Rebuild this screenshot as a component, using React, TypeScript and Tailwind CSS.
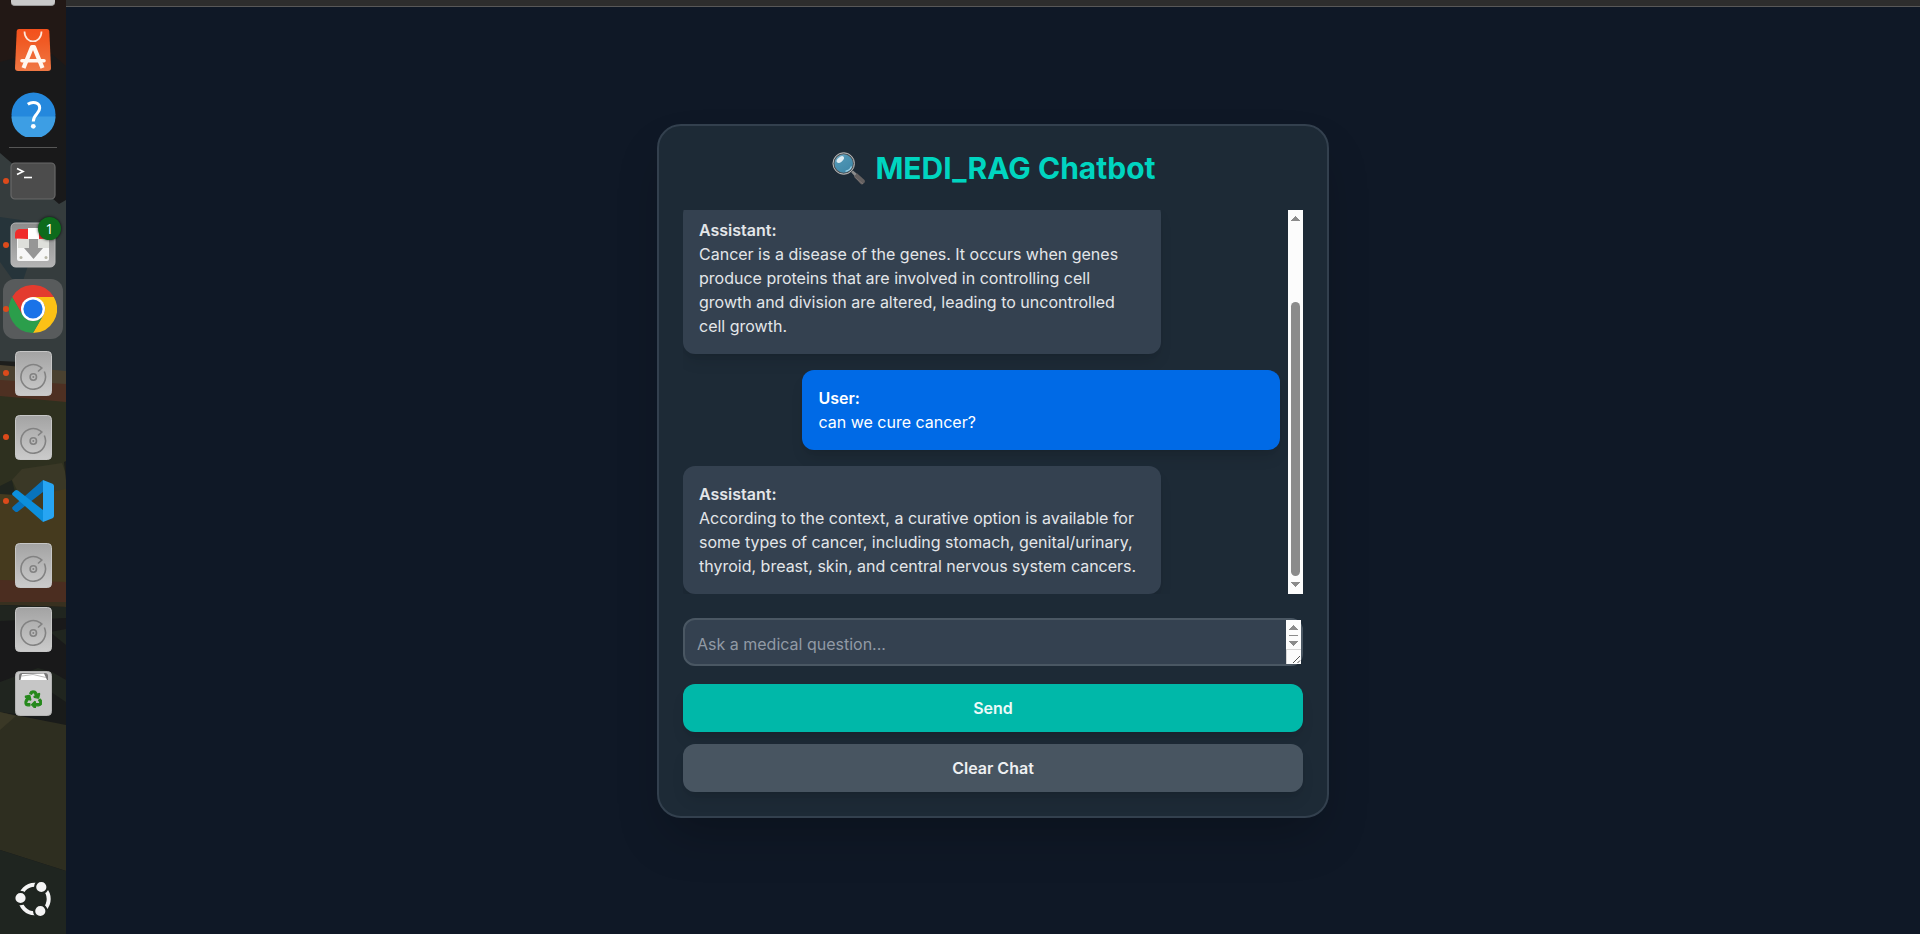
import React from "react";
import { FaRecycle } from "react-icons/fa";

type IconProps = { className?: string };

const Wallpaper = () => (
  <svg className="absolute inset-0" width="66" height="934" viewBox="0 0 66 934">
    <rect width="66" height="934" fill="#19191a" />
    <path d="M0 0H66V66L52 54H30L0 62Z" fill="#221815" />
    <path d="M0 153L59 204L66 200V371H0Z" fill="#353c3d" />
    <path d="M0 217L42 223L20 290L0 262Z" fill="#26343a" />
    <path d="M0 361L66 364V372L0 366Z" fill="#1d1e1c" />
    <path d="M34 361H66V372L30 368Z" fill="#353c3d" />
    <path d="M0 365L66 371V386H0Z" fill="#4a4130" />
    <path d="M0 380L66 384V404H0Z" fill="#4e3022" />
    <path d="M0 396L66 402V500H0Z" fill="#2e301f" />
    <path d="M0 486L12 480L16 496L0 495Z" fill="#20251e" />
    <path d="M12 480L22 469L62 463L66 474V500H22Z" fill="#3a3826" />
    <path d="M64 462L66 461V480Z" fill="#1d1e1c" />
    <path d="M0 494L30 496L66 489V584H0Z" fill="#453a1e" />
    <path d="M0 580L66 582V603H0Z" fill="#4b2d20" />
    <path d="M0 602H66V607L0 605Z" fill="#38301f" />
    <path d="M0 605L66 607V618L0 621Z" fill="#20251f" />
    <path d="M50 632L66 629V645Z" fill="#20251f" />
    <path d="M0 682L38 668L52 672L66 680V705L22 715L0 712Z" fill="#20251f" />
    <path d="M22 715L48 690L66 702V726Z" fill="#191b1a" />
    <path d="M0 712L66 725V871L0 850Z" fill="#2e2e20" />
    <path d="M0 712L16 716L0 730Z" fill="#3a3826" />
    <path d="M0 850L66 871V934H0Z" fill="#1f2520" />
  </svg>
);

const SoftwareIcon = ({ className }: IconProps) => (
  <svg className={className} width="36" height="42" viewBox="0 0 36 42">
    <defs>
      <linearGradient id="bag" x2="0" y2="1">
        <stop stopColor="#f4501c" />
        <stop offset=".3" stopColor="#f05a24" />
        <stop offset="1" stopColor="#f07844" />
      </linearGradient>
    </defs>
    <path d="M4 0H32Q34 0 34.300 2L36 39Q36 42 33 42H3Q0 42 0 39L1.700 2Q2 0 4 0Z" fill="url(#bag)" />
    <path d="M9.500 2.500C9.500 15.500 26.500 15.500 26.500 2.500" fill="none" stroke="#fde7dc" strokeWidth="1.700" />
    <path d="M8.500 39L17 18H19L27.500 39" fill="none" stroke="#fff7f0" strokeWidth="4.200" strokeLinejoin="round" />
    <path d="M7 31.800H29" stroke="#fff7f0" strokeWidth="3.600" strokeLinecap="round" />
  </svg>
);

const HelpIcon = ({ className }: IconProps) => (
  <svg className={className} width="45" height="45" viewBox="0 0 45 45">
    <circle cx="22.500" cy="22.500" r="22" fill="#2488dd" />
    <path d="M.5 24.500H44.500A22 22 0 0 1 .5 24.500Z" fill="#3d9ee4" />
    <path d="M16.800 12.200C21.500 9 28.700 10.200 28.700 16C28.700 22 22.300 22.300 22.300 29.500" fill="none" stroke="#fff" strokeWidth="3" />
    <circle cx="22.300" cy="34.300" r="2.400" fill="#fff" />
  </svg>
);

const TerminalIcon = ({ className }: IconProps) => (
  <svg className={className} width="46" height="38" viewBox="0 0 46 38">
    <rect x="1" y="1" width="44" height="36" rx="4" fill="#4c4c4c" stroke="#686868" strokeWidth="1.200" />
    <path d="M7 6.500L13 9.500L7 12.500" fill="none" stroke="#fff" strokeWidth="1.700" />
    <path d="M14 15.500H22" stroke="#fff" strokeWidth="1.600" />
  </svg>
);

const InstallerIcon = ({ className }: IconProps) => (
  <svg className={className} width="46" height="46" viewBox="0 0 46 46">
    <defs>
      <linearGradient id="inst" x2="0" y2="1">
        <stop stopColor="#8c8c8c" />
        <stop offset="1" stopColor="#b4b4b4" />
      </linearGradient>
    </defs>
    <rect x="1" y="1" width="44" height="44" rx="4.500" fill="url(#inst)" stroke="#b8b8b8" />
    <rect x="7" y="15" width="32" height="24" rx="2" fill="#f7f7f7" />
    <path d="M8 17H19V26H8ZM28 17H39V26H28Z" fill="#dedfdb" />
    <path d="M9 7H18V17L5 16.500V12Q5 8 9 7Z" fill="#f02b2b" />
    <path d="M18 6H29V17H18Z" fill="#fff" />
    <path d="M29 7H37Q41 8 41 12V16.500L29 17Z" fill="#f02b2b" />
    <path d="M19 17H28V26H33L23.500 37L14 26H19Z" fill="#969696" />
    <circle cx="11" cy="35.500" r="1.500" fill="#b9b8a8" />
    <circle cx="36" cy="35.500" r="1.500" fill="#b9b8a8" />
  </svg>
);

const ChromeIcon = ({ className }: IconProps) => (
  <svg className={className} width="48" height="48" viewBox="0 0 48 48">
    <path d="M3.200 12A24 24 0 0 1 44.800 12H24L13.600 30Z" fill="#e33b2e" />
    <path d="M44.800 12A24 24 0 0 1 24 48L34.400 30A12 12 0 0 0 34.400 18L24 12Z" fill="#fbc116" />
    <path d="M24 48A24 24 0 0 1 3.200 12L13.600 30A12 12 0 0 0 34.400 30Z" fill="#2b9e4b" />
    <circle cx="24" cy="24" r="12" fill="#fff" />
    <circle cx="24" cy="24" r="9.600" fill="#1a73e8" />
  </svg>
);

const DriveIcon = ({ className }: IconProps) => (
  <svg className={className} width="37" height="45" viewBox="0 0 37 45">
    <defs>
      <linearGradient id="drive" x2="0" y2="1">
        <stop stopColor="#a3a3a3" />
        <stop offset="1" stopColor="#cbcbcb" />
      </linearGradient>
    </defs>
    <rect x=".5" y=".5" width="36" height="44" rx="4" fill="url(#drive)" stroke="#c6c6c6" />
    <path d="M29.300 20.500A12.300 12.300 0 1 1 25 15.600L26.800 17L23 20.500" fill="none" stroke="#828282" strokeWidth="1.600" />
    <circle cx="18.300" cy="26" r="3.200" fill="none" stroke="#828282" strokeWidth="1.600" />
    <circle cx="18.300" cy="26" r="1" fill="#828282" />
  </svg>
);

const CodeIcon = ({ className }: IconProps) => (
  <svg className={className} width="42" height="42" viewBox="0 0 42 42">
    <path d="M31 0V12L6 31.500Q4.500 32.500 3 31.500L.6 29.300Q-.5 28 .8 26.700Z" fill="#0873bd" />
    <path d="M31 42V30L6 10.500Q4.500 9.500 3 10.500L.6 12.700Q-.5 14 .8 15.300Z" fill="#0c8fdc" />
    <path d="M31 0L40.500 3.800Q42 4.500 42 6V36Q42 37.500 40.500 38.200L31 42Z" fill="#27a5f3" />
  </svg>
);

const TrashIcon = ({ className }: IconProps) => (
  <svg className={className} width="37" height="45" viewBox="0 0 37 45">
    <rect x=".5" y=".5" width="36" height="44" rx="4" fill="#c6c6c6" stroke="#b3b3b3" />
    <path d="M4 9V5Q4 2 7 2H30Q33 2 33 5V9Z" fill="#777" />
    <path d="M5.500 9L7 3L29 2.500L32 9Z" fill="#fff" />
    <path d="M7 5L18 3.500L31 6.500" fill="none" stroke="#aaa" strokeWidth=".8" />
    <FaRecycle x="9.500" y="19.500" size={17.5} color="#26891c" style={{ strokeWidth: 34 }} />
  </svg>
);

const UbuntuIcon = ({ className }: IconProps) => (
  <svg className={className} width="36" height="36" viewBox="0 0 36 36">
    <circle cx="19.500" cy="18" r="14.200" fill="none" stroke="#f4f4f4" strokeWidth="4" />
    <g fill="#f4f4f4" stroke="#1f2520" strokeWidth="2.200">
      <circle cx="5.500" cy="17" r="6.200" />
      <circle cx="26.300" cy="6" r="6.200" />
      <circle cx="25.300" cy="30" r="6.200" />
    </g>
  </svg>
);

const MagnifierIcon = ({ className }: IconProps) => (
  <svg className={className} width="34" height="34" viewBox="0 0 34 34">
    <defs>
      <linearGradient id="lens" x2=".7" y2="1">
        <stop stopColor="#8fbdd3" />
        <stop offset=".4" stopColor="#4d94b3" />
        <stop offset="1" stopColor="#3f87a8" />
      </linearGradient>
    </defs>
    <path d="M19 20L21 18.500L25 22L23 24.500Z" fill="#8d8d8d" />
    <path d="M22 24.500L25 21.300L32.500 28Q33.500 29 32.500 30.500L31 32Q29.800 33 28.500 31.800Z" fill="#646060" />
    <path d="M22.500 25L31 32" stroke="#857d7d" strokeWidth=".7" />
    <circle cx="11.700" cy="11.500" r="10.200" fill="url(#lens)" stroke="#4c5054" strokeWidth="1.900" />
    <circle cx="11.700" cy="11.500" r="10.700" fill="none" stroke="#b9bcbd" strokeWidth="1" />
    <ellipse cx="8.300" cy="7.600" rx="4.300" ry="2.400" fill="#dcebf2" transform="rotate(-40 8.300 7.600)" />
    <path d="M13.500 19.300Q18 18.500 19.500 14.500" fill="none" stroke="#9fd3e8" strokeWidth="1.200" />
  </svg>
);

const Slot = ({ children, running, active }: { children: React.ReactNode; running?: boolean; active?: boolean }) => (
  <div className="relative flex h-16 w-full shrink-0 items-center justify-center">
    {active && <div className="absolute top-0.5 left-[3px] size-[60px] rounded-xl bg-[#585b5c]" />}
    <div className="relative">{children}</div>
    {running && <div className="absolute top-[29px] left-[3px] size-[5.500px] rounded-full bg-[#dc4a1b]" />}
  </div>
);

const Dock = () => (
  <aside className="relative flex h-full w-[66px] shrink-0 flex-col overflow-hidden">
    <Wallpaper />
    <div className="relative flex h-[18px] shrink-0 justify-center">
      <div className="h-1.5 w-11 rounded-b border-b border-[#999] bg-[#c9c9c9]" />
    </div>
    <Slot><SoftwareIcon /></Slot>
    <Slot><HelpIcon /></Slot>
    <div className="relative flex h-[3px] shrink-0 items-center justify-center">
      <div className="h-px w-12 bg-[#565656]" />
    </div>
    <Slot running><TerminalIcon /></Slot>
    <Slot running>
      <InstallerIcon />
      <span className="absolute -top-[5px] left-7 flex size-[23px] items-center justify-center rounded-full bg-[#0d6b1c] font-['Noto_Sans',sans-serif] text-sm text-white shadow-[0_0_3px_rgba(0,0,0,0.8)]">1</span>
    </Slot>
    <Slot running active><ChromeIcon /></Slot>
    <Slot running><DriveIcon /></Slot>
    <Slot running><DriveIcon /></Slot>
    <Slot running><CodeIcon /></Slot>
    <Slot><DriveIcon /></Slot>
    <Slot><DriveIcon /></Slot>
    <Slot><TrashIcon /></Slot>
    <div className="relative mt-auto flex h-[53px] shrink-0 items-start justify-center pr-px">
      <UbuntuIcon />
    </div>
  </aside>
);

const Arrow = ({ down }: { down?: boolean }) => (
  <svg width="9" height="5" viewBox="0 0 9 5" shapeRendering="crispEdges">
    <path d={down ? "M0 0H9L4.500 5Z" : "M0 5H9L4.500 0Z"} fill="#8b8b8b" />
  </svg>
);

const Message = ({ role, children }: { role: "User" | "Assistant"; children: React.ReactNode }) => (
  <div
    className={
      role === "User"
        ? "w-4/5 shrink-0 self-end rounded-xl bg-[#006ae6] p-4 text-white shadow-lg"
        : "w-4/5 shrink-0 rounded-xl bg-[#344150] p-4 text-[#e3e6e9] shadow-lg"
    }
  >
    <strong className="block font-semibold">{role}:</strong>
    <p>{children}</p>
  </div>
);

export default function App() {
  return (
    <div className="flex h-[934px] w-full overflow-hidden bg-[#0f1826] font-[Inter,sans-serif] text-base leading-6">
      <Dock />
      <div className="flex min-w-0 flex-1 flex-col">
        <div className="h-[7px] shrink-0 border-b border-[#585858] bg-[#2d2d2d]" />
        <main className="flex flex-1 justify-center pt-[117px]">
          <section className="h-[694px] w-2xl rounded-3xl border-2 border-[#33404e] bg-[#1d2a36] p-6 shadow-2xl">
            <h1 className="mb-6 flex h-9 items-center justify-center pl-0.5 text-3xl font-bold text-[#00d5c0]">
              <MagnifierIcon className="mt-0.5 mr-[9px]" />
              <span>MEDI_RAG Chatbot</span>
            </h1>
            <div className="mb-6 flex h-96 overflow-hidden">
              <div className="flex min-w-0 flex-1 flex-col justify-end gap-4 pr-2">
                <Message role="Assistant">
                  Cancer is a disease of the genes. It occurs when genes produce proteins that are involved in controlling cell growth and division are altered, leading to uncontrolled cell growth.
                </Message>
                <Message role="User">can we cure cancer?</Message>
                <Message role="Assistant">
                  According to the context, a curative option is available for some types of cancer, including stomach, genital/urinary, thyroid, breast, skin, and central nervous system cancers.
                </Message>
              </div>
              <div className="flex w-[15px] flex-col items-center bg-[#fcfcfc] pt-1.5 pb-[7px]">
                <Arrow />
                <div className="mt-[81px] h-[240px] w-[9px] flex-1 rounded-full bg-[#8b8b8b]" />
                <div className="mt-1.5 flex"><Arrow down /></div>
              </div>
            </div>
            <div className="mb-[18px] flex h-12 rounded-xl border-2 border-[#4a5763] bg-[#344150]">
              <div className="flex-1 px-3 pt-3 text-[#919aa5]">Ask a medical question...</div>
              <div className="flex w-[15px] flex-col bg-[#fcfcfc]">
                <div className="flex h-[29px] flex-col items-center pt-[5px]">
                  <Arrow />
                  <div className="my-[5px] h-px w-[9px] shrink-0 bg-[#8b8b8b]" />
                  <Arrow down />
                </div>
                <div className="h-[15px] border-t border-l border-[#d5d5d5]">
                  <svg width="14" height="14" viewBox="0 0 14 14">
                    <path d="M6 13L13 6M10.500 13L13 10.500" stroke="#555" strokeWidth="1" />
                  </svg>
                </div>
              </div>
            </div>
            <button className="mb-3 block h-12 w-full rounded-xl bg-[#00b8a9] font-semibold text-[#eefaf9] shadow-lg">Send</button>
            <button className="block h-12 w-full rounded-xl bg-[#485561] font-semibold text-[#eef0f2] shadow-lg">Clear Chat</button>
          </section>
        </main>
      </div>
    </div>
  );
}
